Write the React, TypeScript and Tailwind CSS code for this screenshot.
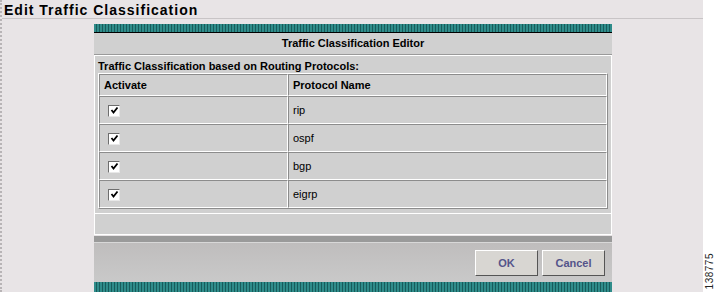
import React from "react";

const protocols = ["rip", "ospf", "bgp", "eigrp"];

const teal =
  "bg-[repeating-linear-gradient(90deg,#2f8c8a_0px,#2f8c8a_2px,#175c5b_2px,#175c5b_3px)]";

const CheckBox = () => (
  <span className="inline-flex w-[12px] h-[12px] bg-white border border-t-[#6e6e6e] border-l-[#6e6e6e] border-b-[#e8e8e8] border-r-[#e8e8e8] items-center justify-center">
    <svg width="9" height="9" viewBox="0 0 9 9">
      <path d="M1.5 4 L3.5 6.5 L7.5 1.5" stroke="#000" strokeWidth="1.8" fill="none" />
    </svg>
  </span>
);

const cell =
  "border-t border-l border-[#8c8c8c] border-b-white border-r-white border-b border-r px-[4px] text-left align-middle";

const App = () => {
  return (
    <div className="w-[716px] h-[292px] flex bg-white overflow-hidden font-['Liberation_Sans',Arial,sans-serif] text-[11px] text-black">
      <div className="w-[703px] h-full bg-[#e8e4e6] border-l-2 border-dotted border-[#b8b4b6] flex flex-col">
        <div className="h-[21px] border-b border-[#c8c4c6] pl-[2px] pt-[2px] text-[14px] font-bold tracking-[1px] leading-[16px]">
          Edit Traffic Classification
        </div>
        <div className="ml-[92px] w-[518px] mt-[5px] flex flex-col">
          <div className={`h-[8px] ${teal}`} />
          <div className="h-[1px] bg-black" />
          <div className="h-[21px] bg-[#d0d0d0] flex items-center justify-center font-bold">
            Traffic Classification Editor
          </div>
          <div className="h-[1px] bg-[#9a9a9a]" />
          <div className="border border-white bg-[#d0d0d0] flex flex-col">
            <div className="h-[17px] pl-[3px] pt-[4px] font-bold leading-[13px]">
              Traffic Classification based on Routing Protocols:
            </div>
            <div className="px-[3px]">
              <table className="w-full border-separate border-spacing-0 border border-t-white border-l-white border-b-[#8c8c8c] border-r-[#8c8c8c]">
                <thead>
                  <tr className="h-[22px]">
                    <th className={`${cell} w-[189px] font-bold`}>Activate</th>
                    <th className={`${cell} font-bold`}>Protocol Name</th>
                  </tr>
                </thead>
                <tbody>
                  {protocols.map(p => (
                    <tr key={p} className="h-[28px]">
                      <td className={`${cell} pl-[8px]`}>
                        <div className="flex items-center pt-[1px]">
                          <CheckBox />
                        </div>
                      </td>
                      <td className={cell}>{p}</td>
                    </tr>
                  ))}
                </tbody>
              </table>
            </div>
            <div className="h-[4px]" />
            <div className="h-[21px] border-t border-white" />
          </div>
          <div className="h-[1px]" />
          <div className="h-[6px] bg-[#9a9a9a]" />
          <div className="h-[1px] bg-[#d8d8d8]" />
          <div className="h-[39px] bg-[linear-gradient(#bfbdbd,#c9c9c9)] flex items-start justify-end gap-[4px] pr-[7px] pt-[7px]">
            <button className="w-[63px] h-[26px] bg-[#d8d6d2] border border-t-white border-l-white border-b-[#555] border-r-[#555] font-bold text-[11px] text-[#54548a]">
              OK
            </button>
            <button className="w-[63px] h-[26px] bg-[#d8d6d2] border border-t-white border-l-white border-b-[#555] border-r-[#555] font-bold text-[11px] text-[#54548a]">
              Cancel
            </button>
          </div>
          <div className={`h-[10px] ${teal}`} />
        </div>
      </div>
      <div className="w-[13px] h-full bg-white flex items-end justify-center pb-[3px]">
        <div className="[writing-mode:vertical-rl] rotate-180 text-[10px] leading-[10px] text-[#222] tracking-[0.5px]">
          138775
        </div>
      </div>
    </div>
  );
};

export default App;
